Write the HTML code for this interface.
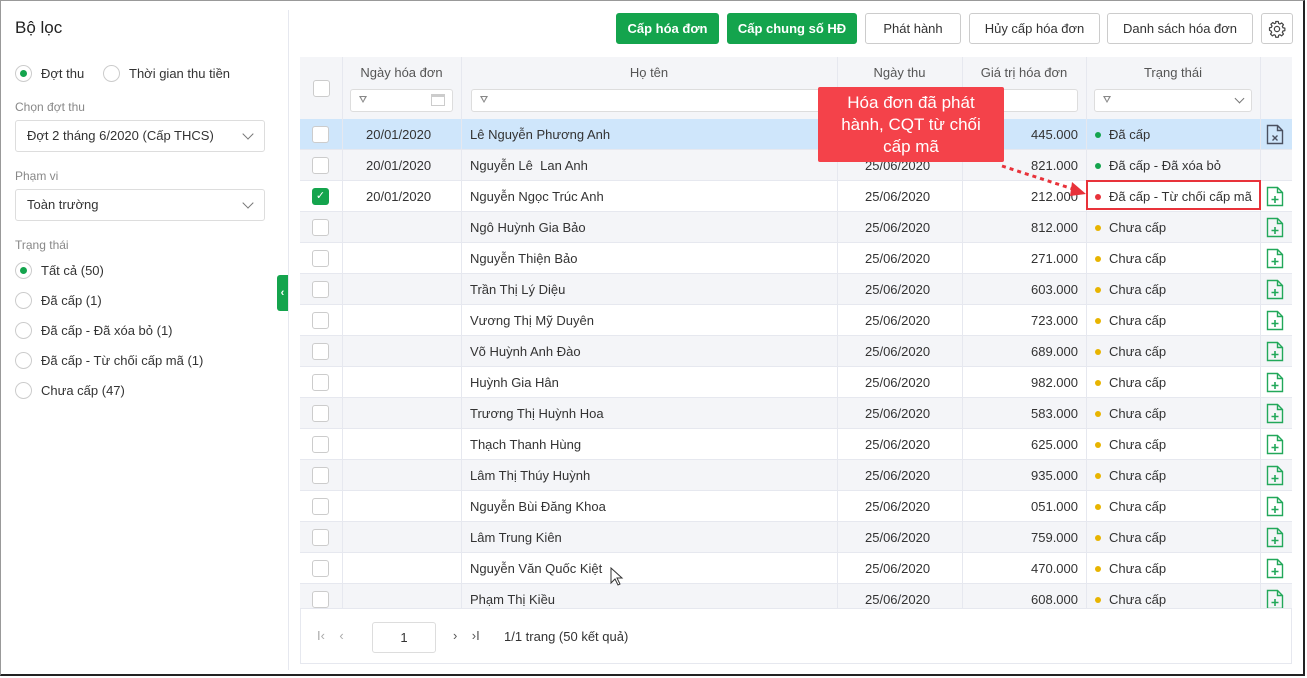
<!DOCTYPE html>
<html><head><meta charset="utf-8"><style>
*{box-sizing:border-box;margin:0;padding:0}
body{width:1307px;height:678px;overflow:hidden;background:#fff;font-family:"Liberation Sans",sans-serif;color:#333;font-size:13px;position:relative}
.a{position:absolute}
.frame{left:0;top:0;width:1305px;height:676px;border-top:1px solid #999;border-left:1px solid #999;border-right:2px solid #222;border-bottom:2px solid #222}
.lbl{color:#888;font-size:12px}
.sel{width:250px;height:32px;border:1px solid #ddd;border-radius:3px;padding:7px 11px;font-size:13px}
.chev{position:absolute;right:12px;top:9px;width:8px;height:8px;border-right:1.5px solid #777;border-bottom:1.5px solid #777;transform:rotate(45deg)}
.rad{width:17px;height:17px;border:1px solid #ccc;border-radius:50%;position:absolute}
.rad.on::after{content:"";position:absolute;left:4px;top:4px;width:7px;height:7px;border-radius:50%;background:#14a44d}
.btn{top:13px;height:31px;border:1px solid #ccc;border-radius:3px;font-size:13px;text-align:center;line-height:29px;background:#fff;color:#333}
.btn.g{background:#14a44d;border-color:#14a44d;color:#fff;font-weight:bold}
.tbl{left:300px;top:57px;width:992px;height:607px;border:1px solid #e6e8ef}
.hd{left:300px;top:57px;width:992px;height:62px;background:#f4f5f8}
.vl{top:57px;width:1px;height:552px;background:#e6e8ef}
.row{left:300px;width:992px;height:31px;border-bottom:1px solid #e6e8ef}
.cb{width:17px;height:17px;border:1px solid #ccc;border-radius:3px;background:#fff;position:absolute;left:12px;top:7px}
.t{position:absolute;top:8px;font-size:13px;white-space:nowrap}
.dot{position:absolute;width:6px;height:6px;border-radius:50%;left:9px;top:13px}
.ht{position:absolute;top:8px;color:#555;font-size:13px;text-align:center}
.inp{position:absolute;top:32px;height:23px;border:1px solid #ddd;border-radius:3px;background:#fff}
.fil{position:absolute;left:8px;top:6px;width:0;height:0;border-left:4px solid transparent;border-right:4px solid transparent;border-top:7px solid #888}
.fil::after{content:"";position:absolute;left:-2px;top:-6px;width:0;height:0;border-left:2px solid transparent;border-right:2px solid transparent;border-top:4px solid #fff}
</style></head><body>
<div class="a frame"></div>
<div class="a" style="left:15px;top:18px;font-size:17px;color:#222">Bộ lọc</div>
<div class="a rad on" style="left:15px;top:65px"></div><div class="a" style="left:41px;top:66px">Đợt thu</div>
<div class="a rad" style="left:103px;top:65px"></div><div class="a" style="left:129px;top:66px">Thời gian thu tiền</div>
<div class="a lbl" style="left:15px;top:100px">Chọn đợt thu</div>
<div class="a sel" style="left:15px;top:120px">Đợt 2 tháng 6/2020 (Cấp THCS)<span class="chev"></span></div>
<div class="a lbl" style="left:15px;top:169px">Phạm vi</div>
<div class="a sel" style="left:15px;top:189px">Toàn trường<span class="chev"></span></div>
<div class="a lbl" style="left:15px;top:238px">Trạng thái</div>
<div class="a rad on" style="left:15px;top:262px"></div><div class="a" style="left:41px;top:263px">Tất cả (50)</div>
<div class="a rad" style="left:15px;top:292px"></div><div class="a" style="left:41px;top:293px">Đã cấp (1)</div>
<div class="a rad" style="left:15px;top:322px"></div><div class="a" style="left:41px;top:323px">Đã cấp - Đã xóa bỏ (1)</div>
<div class="a rad" style="left:15px;top:352px"></div><div class="a" style="left:41px;top:353px">Đã cấp - Từ chối cấp mã (1)</div>
<div class="a rad" style="left:15px;top:382px"></div><div class="a" style="left:41px;top:383px">Chưa cấp (47)</div>
<div class="a" style="left:288px;top:10px;width:1px;height:660px;background:#e6e8ef"></div>
<div class="a" style="left:277px;top:275px;width:11px;height:36px;background:#14a44d;border-radius:3px 0 0 3px;color:#fff;font-size:11px;font-weight:bold;line-height:36px;text-align:center">‹</div>

<div class="a btn g" style="left:616px;width:103px">Cấp hóa đơn</div>
<div class="a btn g" style="left:727px;width:130px">Cấp chung số HĐ</div>
<div class="a btn" style="left:865px;width:96px">Phát hành</div>
<div class="a btn" style="left:969px;width:131px">Hủy cấp hóa đơn</div>
<div class="a btn" style="left:1107px;width:146px">Danh sách hóa đơn</div>
<div class="a btn" style="left:1261px;width:32px"><svg style="position:absolute;left:6px;top:6px" width="18" height="18" viewBox="0 0 24 24"><path d="M10.3 2h3.4l.5 2.6 1.8.8 2.2-1.5 2.4 2.4-1.5 2.2.8 1.8 2.6.5v3.4l-2.6.5-.8 1.8 1.5 2.2-2.4 2.4-2.2-1.5-1.8.8-.5 2.6h-3.4l-.5-2.6-1.8-.8-2.2 1.5-2.4-2.4 1.5-2.2-.8-1.8L2 13.7v-3.4l2.6-.5.8-1.8-1.5-2.2 2.4-2.4 2.2 1.5 1.8-.8z" fill="none" stroke="#444" stroke-width="1.6" stroke-linejoin="round"/><circle cx="12" cy="12" r="3.5" fill="none" stroke="#444" stroke-width="1.6"/></svg></div>

<div class="a tbl"></div>
<div class="a hd"></div>
<div class="a" style="left:300px;top:57px;width:992px;height:62px">
<div class="cb" style="top:23px;left:13px"></div>
<div class="ht" style="left:42px;width:119px">Ngày hóa đơn</div>
<div class="inp" style="left:50px;width:103px"><span class="fil"></span><span style="position:absolute;right:7px;top:4px;width:14px;height:12px;border:1px solid #ccc;border-top-width:3px"></span></div>
<div class="ht" style="left:161px;width:376px">Họ tên</div>
<div class="inp" style="left:171px;width:360px"><span class="fil"></span></div>
<div class="ht" style="left:537px;width:125px">Ngày thu</div>
<div class="ht" style="left:662px;width:124px">Giá trị hóa đơn</div>
<div class="inp" style="left:700px;width:78px"></div>
<div class="ht" style="left:786px;width:174px">Trạng thái</div>
<div class="inp" style="left:794px;width:158px"><span class="fil"></span><span class="chev" style="top:5px;right:8px;width:7px;height:7px"></span></div>
</div>

<div class="a row" style="top:119px;background:#cfe6fb"><div class="cb"></div><div class="t" style="left:66px">20/01/2020</div><div class="t" style="left:170px">Lê Nguyễn Phương Anh</div><div class="t" style="left:565px">25/06/2020</div><div class="t" style="right:214px">445.000</div><span class="dot" style="left:795px;background:#14a44d"></span><div class="t" style="left:809px">Đã cấp</div>
<svg style="position:absolute;left:966px;top:5px" width="18" height="21" viewBox="0 0 18 21"><path d="M1.5 1.5h10l5 5v13h-15z M11.5 1.5v5h5" fill="none" stroke="#4a5060" stroke-width="1.4"/><path d="M6.5 11.5l5 5M11.5 11.5l-5 5" stroke="#4a5060" stroke-width="1.4"/></svg></div>
<div class="a row" style="top:150px;background:#f4f5f8"><div class="cb"></div><div class="t" style="left:66px">20/01/2020</div><div class="t" style="left:170px">Nguyễn Lê&nbsp; Lan Anh</div><div class="t" style="left:565px">25/06/2020</div><div class="t" style="right:214px">821.000</div><span class="dot" style="left:795px;background:#14a44d"></span><div class="t" style="left:809px">Đã cấp - Đã xóa bỏ</div></div>
<div class="a row" style="top:181px;background:#fff"><div class="cb" style="background:#14a44d;border-color:#14a44d;color:#fff;font-size:11px;text-align:center;line-height:15px">✓</div><div class="t" style="left:66px">20/01/2020</div><div class="t" style="left:170px">Nguyễn Ngọc Trúc Anh</div><div class="t" style="left:565px">25/06/2020</div><div class="t" style="right:214px">212.000</div><span class="dot" style="left:795px;background:#e8323a"></span><div class="t" style="left:809px">Đã cấp - Từ chối cấp mã</div><svg class="ic" style="position:absolute;left:966px;top:5px" width="18" height="21" viewBox="0 0 18 21"><path d="M1.5 1.5h10l5 5v13h-15z M11.5 1.5v5h5" fill="none" stroke="#22a85a" stroke-width="1.4"/><path d="M9 10v7M5.5 13.5h7" stroke="#22a85a" stroke-width="1.6"/></svg></div>

<div class="a row" style="top:212px;background:#f4f5f8"><div class="cb"></div><div class="t" style="left:170px">Ngô Huỳnh Gia Bảo</div><div class="t" style="left:565px">25/06/2020</div><div class="t" style="right:214px">812.000</div><span class="dot" style="left:795px;background:#e8b400"></span><div class="t" style="left:809px">Chưa cấp</div><svg style="position:absolute;left:966px;top:5px" width="18" height="21" viewBox="0 0 18 21"><path d="M1.5 1.5h10l5 5v13h-15z M11.5 1.5v5h5" fill="none" stroke="#22a85a" stroke-width="1.4"/><path d="M9 10v7M5.5 13.5h7" stroke="#22a85a" stroke-width="1.6"/></svg></div>
<div class="a row" style="top:243px;background:#fff"><div class="cb"></div><div class="t" style="left:170px">Nguyễn Thiện Bảo</div><div class="t" style="left:565px">25/06/2020</div><div class="t" style="right:214px">271.000</div><span class="dot" style="left:795px;background:#e8b400"></span><div class="t" style="left:809px">Chưa cấp</div><svg style="position:absolute;left:966px;top:5px" width="18" height="21" viewBox="0 0 18 21"><path d="M1.5 1.5h10l5 5v13h-15z M11.5 1.5v5h5" fill="none" stroke="#22a85a" stroke-width="1.4"/><path d="M9 10v7M5.5 13.5h7" stroke="#22a85a" stroke-width="1.6"/></svg></div>
<div class="a row" style="top:274px;background:#f4f5f8"><div class="cb"></div><div class="t" style="left:170px">Trần Thị Lý Diệu</div><div class="t" style="left:565px">25/06/2020</div><div class="t" style="right:214px">603.000</div><span class="dot" style="left:795px;background:#e8b400"></span><div class="t" style="left:809px">Chưa cấp</div><svg style="position:absolute;left:966px;top:5px" width="18" height="21" viewBox="0 0 18 21"><path d="M1.5 1.5h10l5 5v13h-15z M11.5 1.5v5h5" fill="none" stroke="#22a85a" stroke-width="1.4"/><path d="M9 10v7M5.5 13.5h7" stroke="#22a85a" stroke-width="1.6"/></svg></div>
<div class="a row" style="top:305px;background:#fff"><div class="cb"></div><div class="t" style="left:170px">Vương Thị Mỹ Duyên</div><div class="t" style="left:565px">25/06/2020</div><div class="t" style="right:214px">723.000</div><span class="dot" style="left:795px;background:#e8b400"></span><div class="t" style="left:809px">Chưa cấp</div><svg style="position:absolute;left:966px;top:5px" width="18" height="21" viewBox="0 0 18 21"><path d="M1.5 1.5h10l5 5v13h-15z M11.5 1.5v5h5" fill="none" stroke="#22a85a" stroke-width="1.4"/><path d="M9 10v7M5.5 13.5h7" stroke="#22a85a" stroke-width="1.6"/></svg></div>
<div class="a row" style="top:336px;background:#f4f5f8"><div class="cb"></div><div class="t" style="left:170px">Võ Huỳnh Anh Đào</div><div class="t" style="left:565px">25/06/2020</div><div class="t" style="right:214px">689.000</div><span class="dot" style="left:795px;background:#e8b400"></span><div class="t" style="left:809px">Chưa cấp</div><svg style="position:absolute;left:966px;top:5px" width="18" height="21" viewBox="0 0 18 21"><path d="M1.5 1.5h10l5 5v13h-15z M11.5 1.5v5h5" fill="none" stroke="#22a85a" stroke-width="1.4"/><path d="M9 10v7M5.5 13.5h7" stroke="#22a85a" stroke-width="1.6"/></svg></div>
<div class="a row" style="top:367px;background:#fff"><div class="cb"></div><div class="t" style="left:170px">Huỳnh Gia Hân</div><div class="t" style="left:565px">25/06/2020</div><div class="t" style="right:214px">982.000</div><span class="dot" style="left:795px;background:#e8b400"></span><div class="t" style="left:809px">Chưa cấp</div><svg style="position:absolute;left:966px;top:5px" width="18" height="21" viewBox="0 0 18 21"><path d="M1.5 1.5h10l5 5v13h-15z M11.5 1.5v5h5" fill="none" stroke="#22a85a" stroke-width="1.4"/><path d="M9 10v7M5.5 13.5h7" stroke="#22a85a" stroke-width="1.6"/></svg></div>
<div class="a row" style="top:398px;background:#f4f5f8"><div class="cb"></div><div class="t" style="left:170px">Trương Thị Huỳnh Hoa</div><div class="t" style="left:565px">25/06/2020</div><div class="t" style="right:214px">583.000</div><span class="dot" style="left:795px;background:#e8b400"></span><div class="t" style="left:809px">Chưa cấp</div><svg style="position:absolute;left:966px;top:5px" width="18" height="21" viewBox="0 0 18 21"><path d="M1.5 1.5h10l5 5v13h-15z M11.5 1.5v5h5" fill="none" stroke="#22a85a" stroke-width="1.4"/><path d="M9 10v7M5.5 13.5h7" stroke="#22a85a" stroke-width="1.6"/></svg></div>
<div class="a row" style="top:429px;background:#fff"><div class="cb"></div><div class="t" style="left:170px">Thạch Thanh Hùng</div><div class="t" style="left:565px">25/06/2020</div><div class="t" style="right:214px">625.000</div><span class="dot" style="left:795px;background:#e8b400"></span><div class="t" style="left:809px">Chưa cấp</div><svg style="position:absolute;left:966px;top:5px" width="18" height="21" viewBox="0 0 18 21"><path d="M1.5 1.5h10l5 5v13h-15z M11.5 1.5v5h5" fill="none" stroke="#22a85a" stroke-width="1.4"/><path d="M9 10v7M5.5 13.5h7" stroke="#22a85a" stroke-width="1.6"/></svg></div>
<div class="a row" style="top:460px;background:#f4f5f8"><div class="cb"></div><div class="t" style="left:170px">Lâm Thị Thúy Huỳnh</div><div class="t" style="left:565px">25/06/2020</div><div class="t" style="right:214px">935.000</div><span class="dot" style="left:795px;background:#e8b400"></span><div class="t" style="left:809px">Chưa cấp</div><svg style="position:absolute;left:966px;top:5px" width="18" height="21" viewBox="0 0 18 21"><path d="M1.5 1.5h10l5 5v13h-15z M11.5 1.5v5h5" fill="none" stroke="#22a85a" stroke-width="1.4"/><path d="M9 10v7M5.5 13.5h7" stroke="#22a85a" stroke-width="1.6"/></svg></div>
<div class="a row" style="top:491px;background:#fff"><div class="cb"></div><div class="t" style="left:170px">Nguyễn Bùi Đăng Khoa</div><div class="t" style="left:565px">25/06/2020</div><div class="t" style="right:214px">051.000</div><span class="dot" style="left:795px;background:#e8b400"></span><div class="t" style="left:809px">Chưa cấp</div><svg style="position:absolute;left:966px;top:5px" width="18" height="21" viewBox="0 0 18 21"><path d="M1.5 1.5h10l5 5v13h-15z M11.5 1.5v5h5" fill="none" stroke="#22a85a" stroke-width="1.4"/><path d="M9 10v7M5.5 13.5h7" stroke="#22a85a" stroke-width="1.6"/></svg></div>
<div class="a row" style="top:522px;background:#f4f5f8"><div class="cb"></div><div class="t" style="left:170px">Lâm Trung Kiên</div><div class="t" style="left:565px">25/06/2020</div><div class="t" style="right:214px">759.000</div><span class="dot" style="left:795px;background:#e8b400"></span><div class="t" style="left:809px">Chưa cấp</div><svg style="position:absolute;left:966px;top:5px" width="18" height="21" viewBox="0 0 18 21"><path d="M1.5 1.5h10l5 5v13h-15z M11.5 1.5v5h5" fill="none" stroke="#22a85a" stroke-width="1.4"/><path d="M9 10v7M5.5 13.5h7" stroke="#22a85a" stroke-width="1.6"/></svg></div>
<div class="a row" style="top:553px;background:#fff"><div class="cb"></div><div class="t" style="left:170px">Nguyễn Văn Quốc Kiệt</div><div class="t" style="left:565px">25/06/2020</div><div class="t" style="right:214px">470.000</div><span class="dot" style="left:795px;background:#e8b400"></span><div class="t" style="left:809px">Chưa cấp</div><svg style="position:absolute;left:966px;top:5px" width="18" height="21" viewBox="0 0 18 21"><path d="M1.5 1.5h10l5 5v13h-15z M11.5 1.5v5h5" fill="none" stroke="#22a85a" stroke-width="1.4"/><path d="M9 10v7M5.5 13.5h7" stroke="#22a85a" stroke-width="1.6"/></svg></div>
<div class="a row" style="top:584px;height:25px;background:#f4f5f8;overflow:hidden"><div class="cb"></div><div class="t" style="left:170px">Phạm Thị Kiều</div><div class="t" style="left:565px">25/06/2020</div><div class="t" style="right:214px">608.000</div><span class="dot" style="left:795px;background:#e8b400"></span><div class="t" style="left:809px">Chưa cấp</div><svg style="position:absolute;left:966px;top:5px" width="18" height="21" viewBox="0 0 18 21"><path d="M1.5 1.5h10l5 5v13h-15z M11.5 1.5v5h5" fill="none" stroke="#22a85a" stroke-width="1.4"/><path d="M9 10v7M5.5 13.5h7" stroke="#22a85a" stroke-width="1.6"/></svg></div>

<div class="a vl" style="left:342px"></div>
<div class="a vl" style="left:461px"></div>
<div class="a vl" style="left:837px"></div>
<div class="a vl" style="left:962px"></div>
<div class="a vl" style="left:1086px"></div>
<div class="a vl" style="left:1260px"></div>

<svg class="a" style="left:610px;top:567px" width="14" height="20" viewBox="0 0 14 20"><path d="M1 1v15l4-4 3 6 2-1-3-6h5z" fill="#fff" stroke="#333" stroke-width="1"/></svg>

<div class="a" style="left:317px;top:628px;color:#aaa;font-size:13px">I&lsaquo;&nbsp;&nbsp;&nbsp;&nbsp;&lsaquo;</div>
<div class="a" style="left:372px;top:622px;width:64px;height:31px;border:1px solid #ddd;border-radius:3px;text-align:center;line-height:29px">1</div>
<div class="a" style="left:453px;top:628px;color:#555">&rsaquo;&nbsp;&nbsp;&nbsp;&nbsp;&rsaquo;I</div>
<div class="a" style="left:504px;top:629px">1/1 trang (50 kết quả)</div>

<div class="a" style="left:1086px;top:180px;width:175px;height:30px;border:2px solid #e8323a"></div>
<div class="a" style="left:818px;top:87px;width:186px;height:75px;background:#f4424a;border-radius:2px;color:#fff;font-size:17px;line-height:22px;text-align:center;padding-top:5px">Hóa đơn đã phát<br>hành, CQT từ chối<br>cấp mã</div>
<svg class="a" style="left:1000px;top:160px" width="90" height="40" viewBox="0 0 90 40"><path d="M2 6L76 30" stroke="#e8323a" stroke-width="3" stroke-dasharray="4 4"/><path d="M86 34L72 22 70 36z" fill="#e8323a"/></svg>
</body></html>
